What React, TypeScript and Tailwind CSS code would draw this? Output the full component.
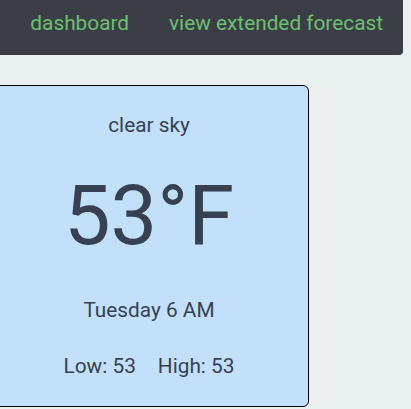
import React from 'react';

const App: React.FC = () => {
  return (
    <div className="h-screen w-full overflow-hidden bg-[#eaeff0] font-['Roboto',sans-serif] text-[#374151]">
      <nav className="flex h-[55px] w-[403px] items-center justify-end rounded-br-sm bg-[#3b3e47] pb-[9px]">
        <a className="px-5 text-[20.8px] leading-7 text-[#6cc070]" href="#/">dashboard</a>
        <a className="px-5 text-[20.8px] leading-7 text-[#6cc070]" href="#/forecast">view extended forecast</a>
      </nav>

      <div className="mt-[30px] ml-[-11px] flex h-[322px] w-[320px] flex-col items-center rounded-md border border-black bg-[#c2e0f9] pt-[25px]">
        <p className="text-[20.8px] leading-7">clear sky</p>
        <p className="mt-[35px] text-[83px] leading-none">53°F</p>
        <p className="mt-[39px] text-[20.8px] leading-7">Tuesday 6 AM</p>
        <div className="mt-[28px] flex gap-[22px] text-[20.8px] leading-7">
          <span>Low: 53</span>
          <span>High: 53</span>
        </div>
      </div>
    </div>
  );
};

export default App;
